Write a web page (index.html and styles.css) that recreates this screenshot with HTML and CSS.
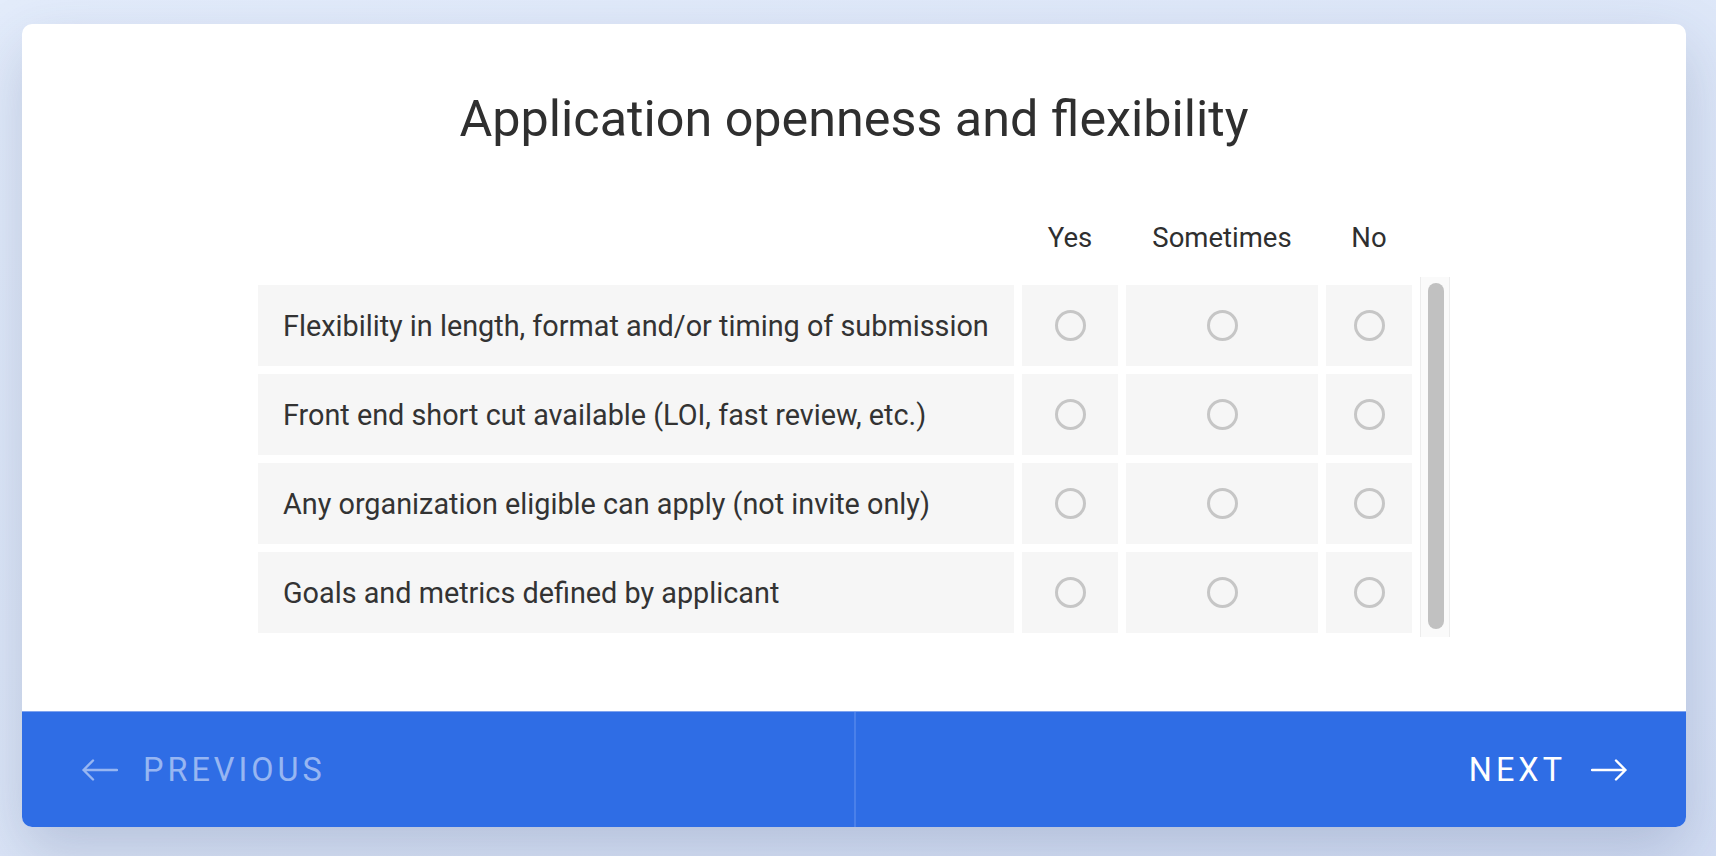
FILE: index.html
```html
<!DOCTYPE html>
<html lang="en">
<head>
    <meta charset="UTF-8">
    <meta name="viewport" content="width=device-width, initial-scale=1.0">
    <title>Application openness and flexibility</title>
    <link rel="stylesheet" href="styles.css">
</head>
<body>
    <div class="page">
        <div class="card">
            <div class="card-body">
                <h1 class="title">Application openness and flexibility</h1>

                <div class="matrix">
                    <table class="matrix-head">
                        <colgroup>
                            <col class="col-label"><col class="col-yes"><col class="col-some"><col class="col-no">
                        </colgroup>
                        <tr>
                            <th></th>
                            <th>Yes</th>
                            <th>Sometimes</th>
                            <th>No</th>
                        </tr>
                    </table>

                    <div class="matrix-scroll">
                        <table class="matrix-rows">
                            <colgroup>
                                <col class="col-label"><col class="col-yes"><col class="col-some"><col class="col-no">
                            </colgroup>
                            <tr>
                                <td class="label">Flexibility in length, format and/or timing of submission</td>
                                <td><input type="radio" name="q1" value="yes"></td>
                                <td><input type="radio" name="q1" value="sometimes"></td>
                                <td><input type="radio" name="q1" value="no"></td>
                            </tr>
                            <tr>
                                <td class="label">Front end short cut available (LOI, fast review, etc.)</td>
                                <td><input type="radio" name="q2" value="yes"></td>
                                <td><input type="radio" name="q2" value="sometimes"></td>
                                <td><input type="radio" name="q2" value="no"></td>
                            </tr>
                            <tr>
                                <td class="label">Any organization eligible can apply (not invite only)</td>
                                <td><input type="radio" name="q3" value="yes"></td>
                                <td><input type="radio" name="q3" value="sometimes"></td>
                                <td><input type="radio" name="q3" value="no"></td>
                            </tr>
                            <tr>
                                <td class="label">Goals and metrics defined by applicant</td>
                                <td><input type="radio" name="q4" value="yes"></td>
                                <td><input type="radio" name="q4" value="sometimes"></td>
                                <td><input type="radio" name="q4" value="no"></td>
                            </tr>
                        </table>
                        <div class="scroll-track">
                            <div class="scroll-thumb"></div>
                        </div>
                    </div>
                </div>
            </div>

            <div class="card-footer">
                <a class="nav-btn prev" href="#">
                    <svg class="arrow" width="36" height="22" viewBox="0 0 36 22">
                        <path d="M35 11H1.5M11 1.5L1.5 11L11 20.5" fill="none" stroke="currentColor" stroke-width="2.4" stroke-linecap="round" stroke-linejoin="round"/>
                    </svg>
                    <span>Previous</span>
                </a>
                <div class="divider"></div>
                <a class="nav-btn next" href="#">
                    <span>Next</span>
                    <svg class="arrow" width="36" height="22" viewBox="0 0 36 22">
                        <path d="M1 11H34.5M25 1.5L34.5 11L25 20.5" fill="none" stroke="currentColor" stroke-width="2.4" stroke-linecap="round" stroke-linejoin="round"/>
                    </svg>
                </a>
            </div>
        </div>
    </div>
</body>
</html>
```

FILE: styles.css
```css
html, body {
    margin: 0;
    padding: 0;
}
body {
    font-family: Roboto, "Liberation Sans", Arial, sans-serif;
    color: #333;
    background: linear-gradient(160deg, #e3ecfb 0%, #dbe5f7 60%, #d3def4 100%);
    height: 856px;
    overflow: hidden;
}
.page {
    padding: 24px 30px 0 22px;
}
.card {
    height: 803px;
    background-color: #fff;
    border-radius: 10px;
    overflow: hidden;
    display: flex;
    flex-direction: column;
    box-shadow: 0 24px 60px rgba(50, 70, 120, 0.22);
}
.card-body {
    flex: 1;
    padding-top: 65px;
}
.title {
    margin: 0;
    font-size: 50.3px;
    line-height: 60px;
    font-weight: 400;
    text-align: center;
    color: #2f2f2f;
}
.matrix {
    width: 1200px;
    margin: 73px 0 0 228px;
}
.matrix table {
    table-layout: fixed;
    width: 1170px;
}
.col-label { width: 756px; }
.col-yes { width: 96px; }
.col-some { width: 192px; }
.col-no { width: 86px; }
.matrix-head {
    border-spacing: 8px 0;
}
.matrix-head th {
    font-size: 27.5px;
    line-height: 32px;
    font-weight: 400;
    text-align: center;
    padding: 0;
    color: #2f2f2f;
}
.matrix-scroll {
    margin-top: 23px;
    height: 360px;
    display: flex;
    overflow: hidden;
}
.matrix-rows {
    border-spacing: 8px;
    flex: none;
    align-self: flex-start;
}
.matrix-rows td {
    height: 81px;
    padding: 0;
    background-color: #f6f6f6;
    text-align: center;
    vertical-align: middle;
}
.matrix-rows td.label {
    text-align: left;
    padding-left: 25px;
    font-size: 28.8px;
    color: #333;
    white-space: nowrap;
}
input[type="radio"] {
    -webkit-appearance: none;
    appearance: none;
    width: 31px;
    height: 31px;
    margin: 0;
    border: 3px solid #c6c6c6;
    border-radius: 50%;
    background: transparent;
    vertical-align: middle;
    cursor: pointer;
}
.scroll-track {
    width: 30px;
    box-sizing: border-box;
    border-left: 1px solid #ececec;
    border-right: 1px solid #ececec;
    background-color: #fafafa;
    padding: 6px 6px 8px 7px;
}
.scroll-thumb {
    width: 16px;
    height: 100%;
    border-radius: 8px;
    background-color: #c1c1c1;
}
.card-footer {
    height: 115px;
    display: flex;
    background-color: #2f6de5;
    border-top: 1px solid #7fa3ee;
}
.nav-btn {
    flex: 1;
    display: flex;
    align-items: center;
    gap: 25px;
    color: #fff;
    text-decoration: none;
    font-size: 32.4px;
    letter-spacing: 4px;
    text-transform: uppercase;
}
.nav-btn.prev {
    padding-left: 60px;
    color: rgba(255, 255, 255, 0.5);
}
.nav-btn.next {
    justify-content: flex-end;
    padding-right: 59px;
}
.divider {
    width: 2px;
    background-color: #4a80ea;
}
.arrow {
    display: block;
    flex: none;
}
```
